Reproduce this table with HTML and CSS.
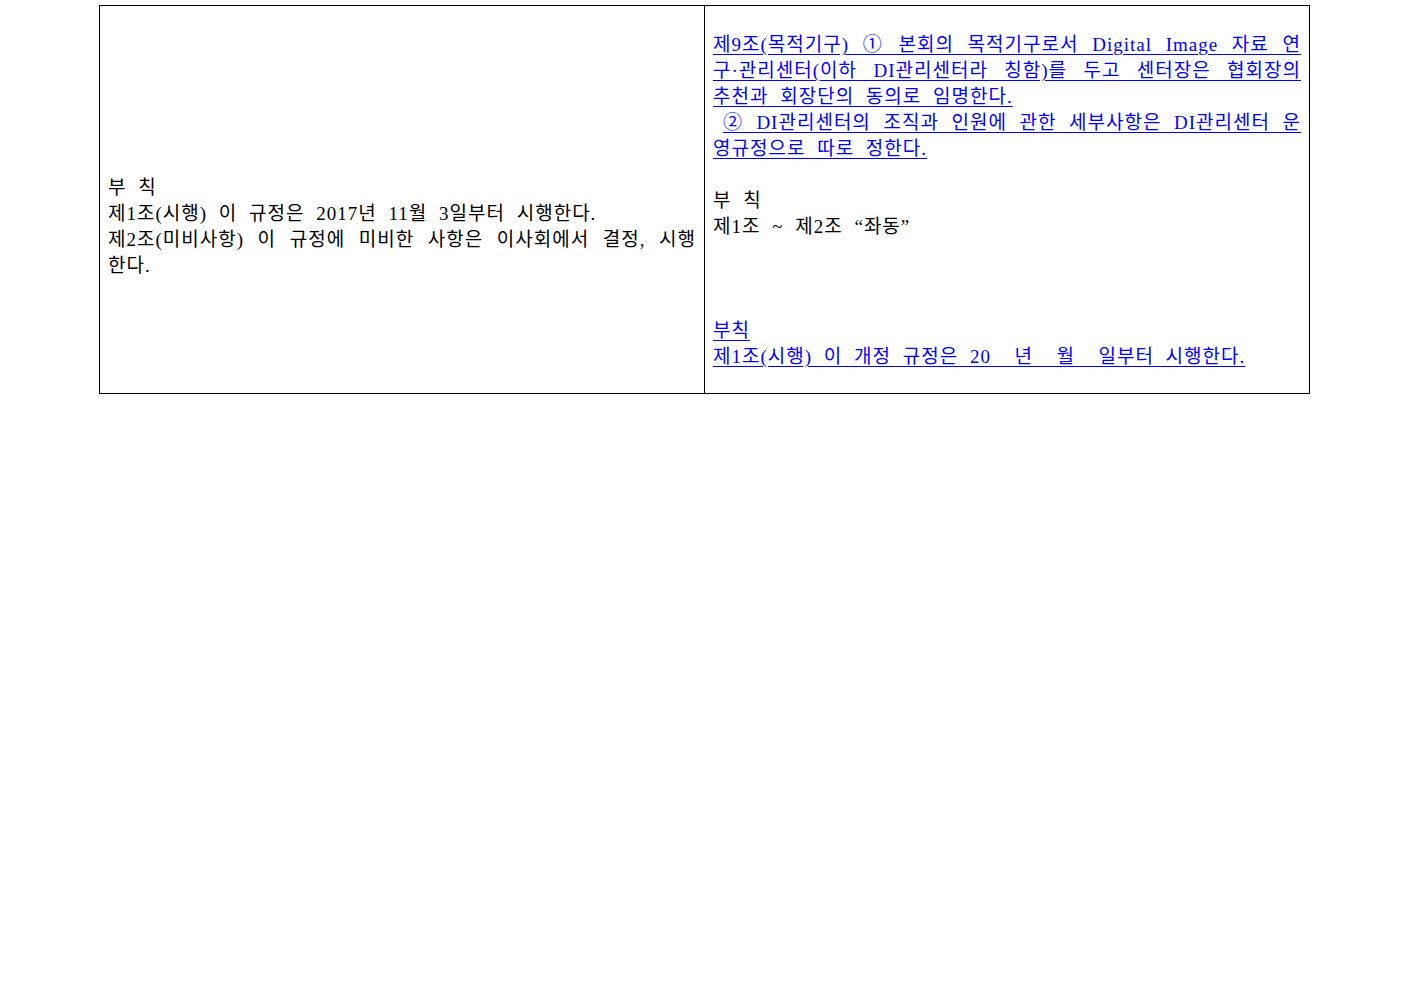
FILE: index.html
```html
<!DOCTYPE html>
<html lang="ko">
<head>
    <meta charset="UTF-8">
    <title>규정 개정 대비표</title>
    <link rel="stylesheet" href="styles.css">
</head>
<body>
    <table class="compare">
        <tr>
            <td class="cell old">
                <p>부 칙</p>
                <p>제1조(시행) 이 규정은 2017년 11월 3일부터 시행한다.</p>
                <p>제2조(미비사항) 이 규정에 미비한 사항은 이사회에서 결정, 시행한다.</p>
            </td>
            <td class="cell new">
                <p class="added">제9조(목적기구) ① 본회의 목적기구로서 Digital Image 자료 연구·관리센터(이하 DI관리센터라 칭함)를 두고 센터장은 협회장의 추천과 회장단의 동의로 임명한다.</p>
                <p class="added indent">② DI관리센터의 조직과 인원에 관한 세부사항은 DI관리센터 운영규정으로 따로 정한다.</p>
                <div class="blank"></div>
                <p>부 칙</p>
                <p>제1조 ~ 제2조 “좌동”</p>
                <div class="blank"></div>
                <div class="blank"></div>
                <div class="blank"></div>
                <p class="added">부칙</p>
                <p class="added">제1조(시행) 이 개정 규정은 20&nbsp;&nbsp;년&nbsp;&nbsp;월&nbsp;&nbsp;일부터 시행한다.</p>
            </td>
        </tr>
    </table>
</body>
</html>
```

FILE: styles.css
```css
* {
    margin: 0;
    padding: 0;
    box-sizing: border-box;
}

body {
    background: #fff;
    font-family: "Liberation Serif", "Noto Sans CJK KR", serif;
    font-size: 19px;
    line-height: 26px;
    letter-spacing: 1px;
    word-spacing: 6px;
    color: #000;
}

.compare {
    border-collapse: collapse;
    width: 1211px;
    margin: 5px 0 0 99px;
    table-layout: fixed;
}

.cell {
    width: 50%;
    border: 1px solid #000;
    padding: 26px 8px 23px 8px;
    text-align: justify;
}

.old {
    vertical-align: middle;
    padding-top: 54px;
    padding-bottom: 0;
}

.new {
    vertical-align: top;
}

.added {
    color: #0000ff;
    text-decoration: underline;
    text-underline-offset: 3px;
}

.indent {
    text-indent: 10px;
}

.blank {
    height: 26px;
}
```
